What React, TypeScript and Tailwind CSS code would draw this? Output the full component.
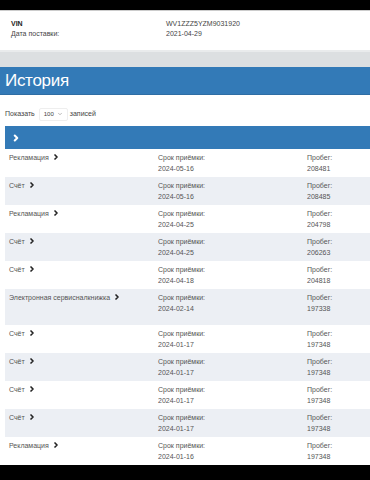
import { ChevronRight, ChevronDown } from 'lucide-react'

const rows = [
  { type: 'Рекламация', date: '2024-05-16', km: '208481' },
  { type: 'Счёт', date: '2024-05-16', km: '208485' },
  { type: 'Рекламация', date: '2024-04-25', km: '204798' },
  { type: 'Счёт', date: '2024-04-25', km: '206263' },
  { type: 'Счёт', date: '2024-04-18', km: '204818' },
  { type: 'Электронная сервисналкнижка', date: '2024-02-14', km: '197338', tall: true },
  { type: 'Счёт', date: '2024-01-17', km: '197348' },
  { type: 'Счёт', date: '2024-01-17', km: '197348' },
  { type: 'Счёт', date: '2024-01-17', km: '197348' },
  { type: 'Счёт', date: '2024-01-17', km: '197348' },
  { type: 'Рекламация', date: '2024-01-16', km: '197348' },
]

function Chevron() {
  return <ChevronRight size={8} strokeWidth={5} className="inline-block text-[#222] ml-[3px] -mt-[2px]" />
}

export default function App() {
  return (
    <div className="h-[480px] w-[370px] overflow-hidden bg-black font-['Liberation_Sans',Arial,sans-serif] pt-[10px]">
      {/* vehicle info */}
      <div className="bg-white h-[40px] border-t border-[#ccc] pt-[8px] pl-[11px] text-[7px] leading-[10px] text-[#444]">
        <div className="flex">
          <div className="w-[155px] font-bold text-[#222]">VIN</div>
          <div>WV1ZZZ5YZM9031920</div>
        </div>
        <div className="flex">
          <div className="w-[155px]">Дата поставки:</div>
          <div>2021-04-29</div>
        </div>
      </div>

      <div className="h-[17px] bg-[#dcdfe1] border-t-2 border-[#e9ebec]" />

      {/* history header */}
      <div className="h-[28px] bg-[#337ab7] border-b border-[#2e6da4] pl-[5px] text-white text-[17px] leading-[28px] tracking-[-0.3px]">
        История
      </div>

      <div className="bg-white">
        <div className="flex items-center h-[31px] pt-[7px] pl-[5px] text-[7px] text-[#444]">
          <span>Показать</span>
          <div className="flex items-center justify-between ml-[4px] mr-[2px] w-[29px] h-[13px] bg-white border border-[#eee] rounded-[2px] px-[4px] text-[6px]">
            <span>100</span>
            <ChevronDown size={6} strokeWidth={2} className="text-[#777]" />
          </div>
          <span>записей</span>
        </div>

        <div className="ml-[5px] h-[23px] bg-[#337ab7] flex items-center pl-[6px]">
          <ChevronRight size={10} strokeWidth={5} className="text-white" />
        </div>

        <div className="ml-[5px]">
          {rows.map((r, i) => (
            <div
              key={i}
              className={`flex text-[7px] leading-[11px] text-[#555] pt-[3px] ${r.tall ? 'h-[36px]' : 'h-[28px]'} ${i % 2 === 1 ? 'bg-[#eceff4]' : 'bg-white'}`}
            >
              <div className="w-[153px] pl-[4px]">
                {r.type}
                <Chevron />
              </div>
              <div className="w-[149px]">
                <div className="whitespace-nowrap">Срок приёмки:</div>
                <div>{r.date}</div>
              </div>
              <div>
                <div className="whitespace-nowrap">Пробег:</div>
                <div>{r.km}</div>
              </div>
            </div>
          ))}
        </div>
      </div>
    </div>
  )
}
